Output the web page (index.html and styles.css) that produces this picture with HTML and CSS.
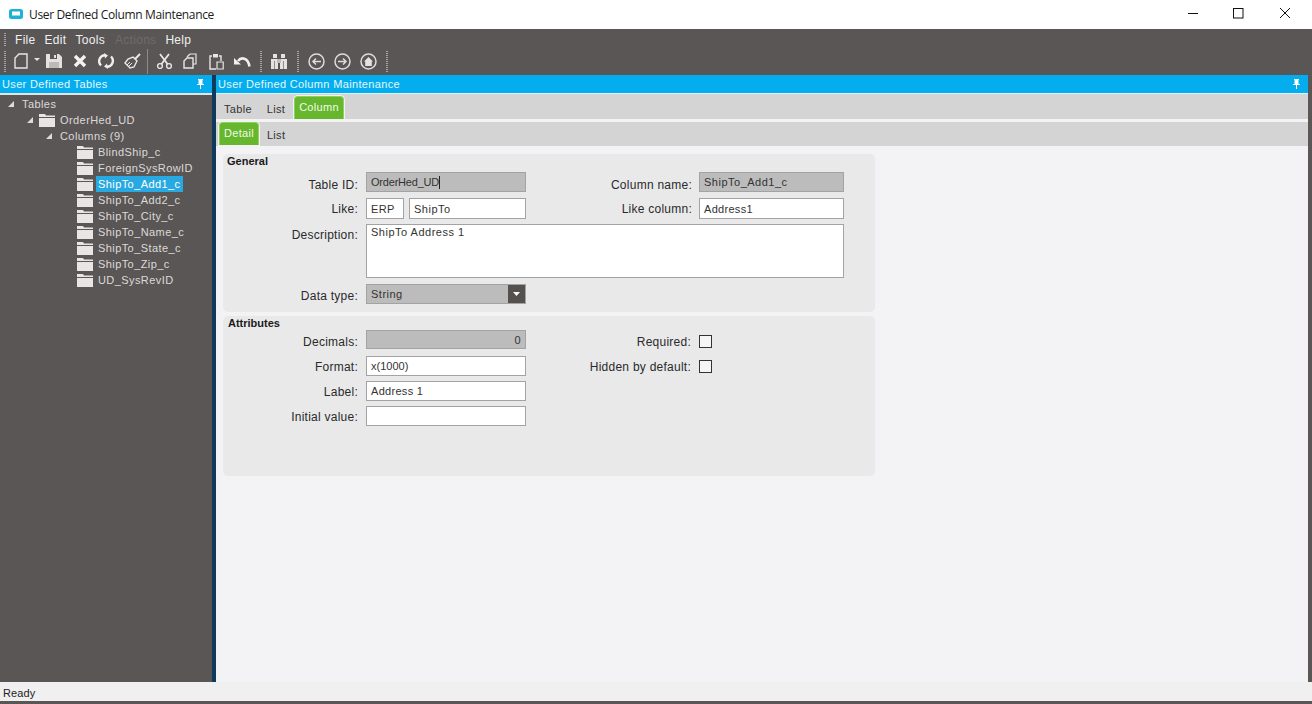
FILE: index.html
```html
<!DOCTYPE html>
<html lang="en">
<head>
<meta charset="utf-8">
<title>User Defined Column Maintenance</title>
<link rel="stylesheet" href="styles.css">
</head>
<body>
<div class="app">
  <header class="titlebar">
    <svg class="app-icon" width="14" height="10" viewBox="0 0 14 10"><rect width="14" height="10" rx="2.5" fill="#1db3d6"/><rect x="3" y="2.5" width="8" height="4" fill="#fff"/></svg>
    <span class="title-text">User Defined Column Maintenance</span>
    <div class="win-controls">
      <svg class="win-btn" width="46" height="29" viewBox="0 0 46 29"><path d="M18 13.5h10" stroke="#111" stroke-width="1"/></svg>
      <svg class="win-btn" width="46" height="29" viewBox="0 0 46 29"><rect x="17.5" y="8.5" width="9.5" height="9.5" fill="none" stroke="#111"/></svg>
      <svg class="win-btn" width="46" height="29" viewBox="0 0 46 29"><path d="M18 8l10 10M28 8L18 18" stroke="#111" fill="none"/></svg>
    </div>
  </header>

  <nav class="menubar">
    <span class="grip"></span>
    <span class="menu-item">File</span>
    <span class="menu-item">Edit</span>
    <span class="menu-item">Tools</span>
    <span class="menu-item disabled">Actions</span>
    <span class="menu-item">Help</span>
  </nav>

  <div class="toolbar">
    <span class="grip"></span>
    <button class="tool first"><svg width="14" height="16" viewBox="0 0 14 16"><path d="M5 1h8v14H1V5z" fill="none" stroke="#e6e6e6" stroke-width="1.4"/></svg></button>
    <svg class="drop" width="7" height="4" viewBox="0 0 7 4"><path d="M0 0h6L3 3z" fill="#e6e6e6"/></svg>
    <button class="tool"><svg width="16" height="16" viewBox="0 0 16 16"><path d="M0 1h13l3 3v11H0z" fill="#e4e2e0"/><rect x="4" y="1" width="7" height="5" fill="#5a5655"/><rect x="8" y="2" width="2" height="3" fill="#e4e2e0"/><rect x="3" y="9" width="10" height="6" fill="#bdbab8"/></svg></button>
    <button class="tool"><svg width="14" height="14" viewBox="0 0 14 14"><path d="M2 2l10 10M12 2L2 12" stroke="#f2f2f2" stroke-width="3.4" fill="none"/></svg></button>
    <button class="tool"><svg width="16" height="16" viewBox="0 0 16 16"><path d="M7 2.200A6 6 0 0 0 3 12.500M9 13.800A6 6 0 0 0 13 3.500" fill="none" stroke="#efefef" stroke-width="2.400"/><path d="M6 0l4 2.500-3 3zM10 16l-4-2.500 3-3z" fill="#efefef"/></svg></button>
    <button class="tool"><svg width="17" height="16" viewBox="0 0 17 16"><path d="M16 1l-5 5" stroke="#e8e8e8" stroke-width="2" fill="none"/><path d="M9 4l4 4-3 6-4 1-5-5 3-4z" fill="none" stroke="#e8e8e8" stroke-width="1.4"/><path d="M6 9l-3 3M8 10l-3 3" stroke="#e8e8e8"/></svg></button>
    <span class="sep"></span>
    <button class="tool"><svg width="17" height="16" viewBox="0 0 17 16"><circle cx="4" cy="13" r="2.4" fill="none" stroke="#e8e8e8" stroke-width="1.4"/><circle cx="13" cy="13" r="2.4" fill="none" stroke="#e8e8e8" stroke-width="1.4"/><path d="M5.500 11L13 1M11.500 11L4 1" stroke="#e8e8e8" stroke-width="1.800" fill="none"/></svg></button>
    <button class="tool"><svg width="14" height="16" viewBox="0 0 14 16"><path d="M7 1h6v10h-3" fill="none" stroke="#e6e6e6" stroke-width="1.200"/><path d="M7 1L4 4" fill="none" stroke="#e6e6e6" stroke-width="1.200"/><path d="M4 5h6v10H1V8z" fill="none" stroke="#e6e6e6" stroke-width="1.400"/></svg></button>
    <button class="tool"><svg width="15" height="17" viewBox="0 0 15 17"><path d="M3 3H1v13h6" fill="none" stroke="#e6e6e6" stroke-width="1.400"/><path d="M10 3h2v5" fill="none" stroke="#e6e6e6" stroke-width="1.400"/><rect x="4" y="1" width="5" height="3.500" fill="#e6e6e6"/><path d="M8 9h6.200v7H8z" fill="#5a5655" stroke="#e6e6e6" stroke-width="1.200"/></svg></button>
    <button class="tool"><svg width="17" height="11" viewBox="0 0 17 11"><path d="M4 5C7 1 14 1 15.500 10.500" fill="none" stroke="#efefef" stroke-width="2.600"/><path d="M0 2l7 6.500H0z" fill="#efefef"/></svg></button>
    <span class="grip-gap"><span class="grip"></span></span>
    <button class="tool"><svg width="16" height="15" viewBox="0 0 16 15"><rect x="2" y="0" width="4" height="4" fill="#e4e2e0"/><rect x="10" y="0" width="4" height="4" fill="#e4e2e0"/><rect x="0" y="5" width="7" height="10" fill="#e4e2e0"/><rect x="9" y="5" width="7" height="10" fill="#e4e2e0"/><rect x="6" y="5" width="4" height="4" fill="#bdbab8"/><rect x="3" y="7" width="1" height="8" fill="#8f8c8a"/><rect x="12" y="7" width="1" height="8" fill="#8f8c8a"/></svg></button>
    <span class="grip-gap"><span class="grip"></span></span>
    <button class="tool"><svg width="17" height="17" viewBox="0 0 17 17"><circle cx="8.500" cy="8.500" r="7.500" fill="none" stroke="#dcdcdc" stroke-width="1.500"/><path d="M13 8.500H5M8 5.500l-3 3 3 3" fill="none" stroke="#dcdcdc" stroke-width="1.500"/></svg></button>
    <button class="tool"><svg width="17" height="17" viewBox="0 0 17 17"><circle cx="8.500" cy="8.500" r="7.500" fill="none" stroke="#dcdcdc" stroke-width="1.500"/><path d="M4 8.500h8M9 5.500l3 3-3 3" fill="none" stroke="#dcdcdc" stroke-width="1.500"/></svg></button>
    <button class="tool"><svg width="17" height="17" viewBox="0 0 17 17"><circle cx="8.500" cy="8.500" r="7.500" fill="none" stroke="#dcdcdc" stroke-width="1.500"/><path d="M8.500 4L4 8.500h1.200V13h6.600V8.500H13z" fill="#e4e2e0"/></svg></button>
    <span class="grip-gap"><span class="grip"></span></span>
  </div>

  <main class="workspace">
    <aside class="side">
      <div class="panel-head">
        <span>User Defined Tables</span>
        <svg class="pin" width="9" height="10" viewBox="0 0 9 10"><path d="M2 0h5v1H6.500v4H8v1H5v4H4V6H1V5h1.500V1H2z" fill="#fff"/></svg>
      </div>
      <ul class="tree">
        <li class="node lvl0"><span class="arrow"></span><span class="label">Tables</span></li>
        <li class="node lvl1"><span class="arrow"></span><svg class="folder" width="16" height="13" viewBox="0 0 16 13"><path d="M0 0h6l1 1.500h9V3H0z" fill="#e8e6e4"/><rect y="4" width="16" height="9" fill="#e8e6e4"/></svg><span class="label">OrderHed_UD</span></li>
        <li class="node lvl2"><span class="arrow"></span><span class="label">Columns (9)</span></li>
        <li class="node lvl3"><svg class="folder" width="16" height="13" viewBox="0 0 16 13"><path d="M0 0h6l1 1.500h9V3H0z" fill="#e8e6e4"/><rect y="4" width="16" height="9" fill="#e8e6e4"/></svg><span class="label">BlindShip_c</span></li>
        <li class="node lvl3"><svg class="folder" width="16" height="13" viewBox="0 0 16 13"><path d="M0 0h6l1 1.500h9V3H0z" fill="#e8e6e4"/><rect y="4" width="16" height="9" fill="#e8e6e4"/></svg><span class="label">ForeignSysRowID</span></li>
        <li class="node lvl3"><svg class="folder" width="16" height="13" viewBox="0 0 16 13"><path d="M0 0h6l1 1.500h9V3H0z" fill="#e8e6e4"/><rect y="4" width="16" height="9" fill="#e8e6e4"/></svg><span class="label selected">ShipTo_Add1_c</span></li>
        <li class="node lvl3"><svg class="folder" width="16" height="13" viewBox="0 0 16 13"><path d="M0 0h6l1 1.500h9V3H0z" fill="#e8e6e4"/><rect y="4" width="16" height="9" fill="#e8e6e4"/></svg><span class="label">ShipTo_Add2_c</span></li>
        <li class="node lvl3"><svg class="folder" width="16" height="13" viewBox="0 0 16 13"><path d="M0 0h6l1 1.500h9V3H0z" fill="#e8e6e4"/><rect y="4" width="16" height="9" fill="#e8e6e4"/></svg><span class="label">ShipTo_City_c</span></li>
        <li class="node lvl3"><svg class="folder" width="16" height="13" viewBox="0 0 16 13"><path d="M0 0h6l1 1.500h9V3H0z" fill="#e8e6e4"/><rect y="4" width="16" height="9" fill="#e8e6e4"/></svg><span class="label">ShipTo_Name_c</span></li>
        <li class="node lvl3"><svg class="folder" width="16" height="13" viewBox="0 0 16 13"><path d="M0 0h6l1 1.500h9V3H0z" fill="#e8e6e4"/><rect y="4" width="16" height="9" fill="#e8e6e4"/></svg><span class="label">ShipTo_State_c</span></li>
        <li class="node lvl3"><svg class="folder" width="16" height="13" viewBox="0 0 16 13"><path d="M0 0h6l1 1.500h9V3H0z" fill="#e8e6e4"/><rect y="4" width="16" height="9" fill="#e8e6e4"/></svg><span class="label">ShipTo_Zip_c</span></li>
        <li class="node lvl3"><svg class="folder" width="16" height="13" viewBox="0 0 16 13"><path d="M0 0h6l1 1.500h9V3H0z" fill="#e8e6e4"/><rect y="4" width="16" height="9" fill="#e8e6e4"/></svg><span class="label">UD_SysRevID</span></li>
      </ul>
    </aside>

    <section class="content">
      <div class="panel-head">
        <span>User Defined Column Maintenance</span>
        <svg class="pin" width="9" height="10" viewBox="0 0 9 10"><path d="M2 0h5v1H6.500v4H8v1H5v4H4V6H1V5h1.500V1H2z" fill="#fff"/></svg>
      </div>
      <div class="tabs tabs-top">
        <span class="tab">Table</span>
        <span class="tab">List</span>
        <span class="tab active">Column</span>
      </div>
      <div class="tabs tabs-sub">
        <span class="tab active">Detail</span>
        <span class="tab">List</span>
      </div>
      <div class="form">
        <fieldset class="group general">
          <h2 class="group-title">General</h2>
          <div class="row r20">
            <label class="lbl low3">Table ID:</label>
            <div class="field ro w160 snug">OrderHed_UD<span class="caret"></span></div>
            <label class="lbl2 low3">Column name:</label>
            <div class="field ro w145 wide">ShipTo_Add1_c</div>
          </div>
          <div class="row r21">
            <label class="lbl">Like:</label>
            <div class="field w38">ERP</div>
            <div class="field w117 gap6 wide">ShipTo</div>
            <label class="lbl2">Like column:</label>
            <div class="field w145">Address1</div>
          </div>
          <div class="row r54">
            <label class="lbl lbl-top">Description:</label>
            <div class="field area wide">ShipTo Address 1</div>
          </div>
          <div class="row r20 last">
            <label class="lbl low2">Data type:</label>
            <div class="field ro w160 combo">String<span class="combo-btn"><svg width="7" height="4" viewBox="0 0 7 4"><path d="M0 0h7L3.500 4z" fill="#fff"/></svg></span></div>
          </div>
        </fieldset>
        <fieldset class="group attrs">
          <h2 class="group-title">Attributes</h2>
          <div class="row r19">
            <label class="lbl low2">Decimals:</label>
            <div class="field ro w160 num">0</div>
            <label class="lbl2 low2">Required:</label>
            <span class="check check-low"></span>
          </div>
          <div class="row r20 tight">
            <label class="lbl low1">Format:</label>
            <div class="field w160 snug0">x(1000)</div>
            <label class="lbl2 low1">Hidden by default:</label>
            <span class="check"></span>
          </div>
          <div class="row r20 tight">
            <label class="lbl low1">Label:</label>
            <div class="field w160">Address 1</div>
          </div>
          <div class="row r20 tight">
            <label class="lbl low1">Initial value:</label>
            <div class="field w160"></div>
          </div>
        </fieldset>
      </div>
    </section>
  </main>

  <footer class="status">Ready</footer>
</div>
</body>
</html>
```
FILE: styles.css
```css
* { box-sizing: border-box; }
html, body { margin: 0; height: 100%; overflow: hidden; }
body { font-family: "Liberation Sans", Arial, sans-serif; font-size: 12px; color: #222; background: #5a5655; }
.app { width: 1312px; height: 704px; display: flex; flex-direction: column; }

.titlebar { height: 29px; flex: none; background: #fff; display: flex; align-items: center; padding-left: 9px; }
.app-icon { margin-top: -2px; }
.title-text { margin-left: 6px; margin-top: -1px; font-family: "Open Sans", sans-serif; font-size: 12px; letter-spacing: -.35px; color: #1a1a1a; }
.win-controls { margin-left: auto; display: flex; margin-right: 4px; }
.win-btn { display: block; }

.menubar { height: 18px; flex: none; background: #5a5655; display: flex; align-items: center; padding-left: 4px; }
.grip { display: block; width: 2px; height: 21px; background-image: linear-gradient(#a8a6a4 50%, transparent 50%); background-size: 2px 2px; }
.menubar .grip { height: 14px; margin-top: 3px; }
.menu-item { color: #f0f0f0; font-size: 12px; letter-spacing: .3px; margin-top: 4px; margin-left: 9px; }
.menu-item.disabled { color: #6f6b6a; margin-left: 10px; }

.toolbar { height: 28px; flex: none; background: #5a5655; display: flex; align-items: center; padding-left: 4px; }
.toolbar > .grip { margin-right: 2px; width: 2px; }
.tool { width: 26px; height: 26px; flex: none; padding: 0; border: 0; background: none; display: flex; align-items: center; justify-content: center; }
.drop { flex: none; width: 7px; margin-top: -3px; }
.sep { flex: none; width: 6px; height: 25px; padding-left: 2px; }
.sep::before { content: ""; display: block; width: 1px; height: 100%; background: #8d8a88; }
.grip-gap { flex: none; width: 11px; display: flex; justify-content: center; }

.workspace { flex: 1; min-height: 0; display: flex; }
.side { width: 212px; flex: none; background: #5a5655; }
.panel-head { height: 18px; background: #04aeee; color: #e6f7fe; display: flex; align-items: center; justify-content: space-between; padding: 0 7px 0 2px; font-size: 11px; letter-spacing: .35px; }
.pin { display: block; }
.tree { list-style: none; margin: 0; padding: 1px 0 0; border-top: 2px solid #e4e4e4; color: #dcdad9; font-size: 11px; letter-spacing: .42px; }
.node { height: 16px; display: flex; align-items: center; }
.arrow { width: 0; height: 0; border-style: solid; border-width: 0 0 6px 6px; border-color: transparent transparent #dcdcdc transparent; flex: none; }
.lvl0 { padding-left: 8px; }
.lvl0 .label { margin-left: 6px; }
.lvl1 { padding-left: 27px; }
.lvl1 .folder { margin-left: 6px; }
.lvl1 .label { margin-left: 3px; }
.lvl2 { padding-left: 46px; }
.lvl2 .label { margin-left: 6px; }
.lvl3 { padding-left: 77px; }
.folder { flex: none; display: block; }
.label { padding: 0 2px; height: 16px; line-height: 16px; margin-left: 3px; white-space: nowrap; }
.selected { background: #29a9e1; color: #fff; }

.content { flex: 1; min-width: 0; margin-left: 4px; margin-right: 4px; display: flex; flex-direction: column; background: #f3f3f5; box-shadow: -4px 0 0 #0f3a5c; }
.tabs { display: flex; background: #d4d4d4; align-items: flex-start; font-size: 11px; letter-spacing: .3px; flex: none; }
.tabs-top { height: 26px; border-top: 1px solid #dff3fb; padding: 2px 0 0 3px; }
.tabs-sub { height: 24px; margin-top: 3px; padding-left: 3px; }
.tab { color: #333; height: 23px; line-height: 26px; padding: 0 5px; margin-right: 3px; }
.tabs-top .tab:nth-child(2) { margin-left: 2px; margin-right: 4px; }
.tab.active { background: #66b62e; color: #f2fbe9; border: 1px solid #8ed05a; border-bottom: 0; border-radius: 4px 4px 0 0; box-shadow: 0 0 0 1px #f2f2f2; line-height: 20px; padding: 0 4px; }

.form { padding: 8px 0 0 7px; }
.group { width: 652px; margin: 0 0 4px; padding: 0 0 8px; border: 0; border-radius: 5px; background: #e9e9ea; }
.attrs { height: 160px; }
.group-title { margin: 0; height: 18px; line-height: 14px; padding-left: 4px; font-size: 11px; font-weight: bold; color: #1a1a1a; }
.attrs .group-title { height: 14px; padding-left: 5px; }
.row { display: flex; align-items: center; margin-bottom: 6px; }
.r20 { height: 20px; }
.r21 { height: 21px; margin-bottom: 5px; }
.r54 { height: 54px; align-items: flex-start; }
.r19 { height: 19px; margin-bottom: 7px; }
.tight { margin-bottom: 5px; }
.last { margin-bottom: 0; }
.lbl, .lbl2 { flex: none; text-align: right; font-size: 12px; letter-spacing: .25px; color: #2a2a2a; }
.lbl { width: 135px; margin-right: 8px; }
.lbl-top { margin-top: 4px; }
.lbl2 { width: 166px; margin-right: 7px; }
.attrs .lbl2 { margin-right: 8px; width: 165px; }
.low1 { padding-top: 2px; }
.low2 { padding-top: 4px; }
.low3 { padding-top: 6px; }
.field { height: 100%; border: 1px solid #a3a3a3; background: #fff; padding: 0 4px; display: flex; align-items: center; font-size: 11px; letter-spacing: .3px; color: #333; flex: none; white-space: nowrap; }
.ro { background: #bcbcbc; }
.wide { letter-spacing: .5px; }
.snug { letter-spacing: -.2px; }
.snug0 { letter-spacing: 0; }
.w160 { width: 160px; }
.w145 { width: 145px; }
.w38 { width: 38px; }
.w117 { width: 117px; }
.gap6 { margin-left: 5px; }
.area { width: 478px; align-items: flex-start; padding-top: 1px; }
.caret { width: 1px; height: 13px; background: #222; display: inline-block; }
.num { justify-content: flex-end; }
.combo { padding-right: 0; position: relative; letter-spacing: .5px; }
.combo-btn { position: absolute; right: 0; top: 0; bottom: 0; width: 17px; background: #55514f; display: flex; align-items: center; justify-content: center; }
.check { width: 13px; height: 13px; border: 1px solid #333; background: #f5f5f5; flex: none; }
.check-low { margin-top: 3px; }

.status { height: 19px; flex: none; background: #f0f0f0; font-size: 11px; letter-spacing: .1px; padding: 5px 0 0 3px; color: #222; margin-bottom: 3px; }
```
